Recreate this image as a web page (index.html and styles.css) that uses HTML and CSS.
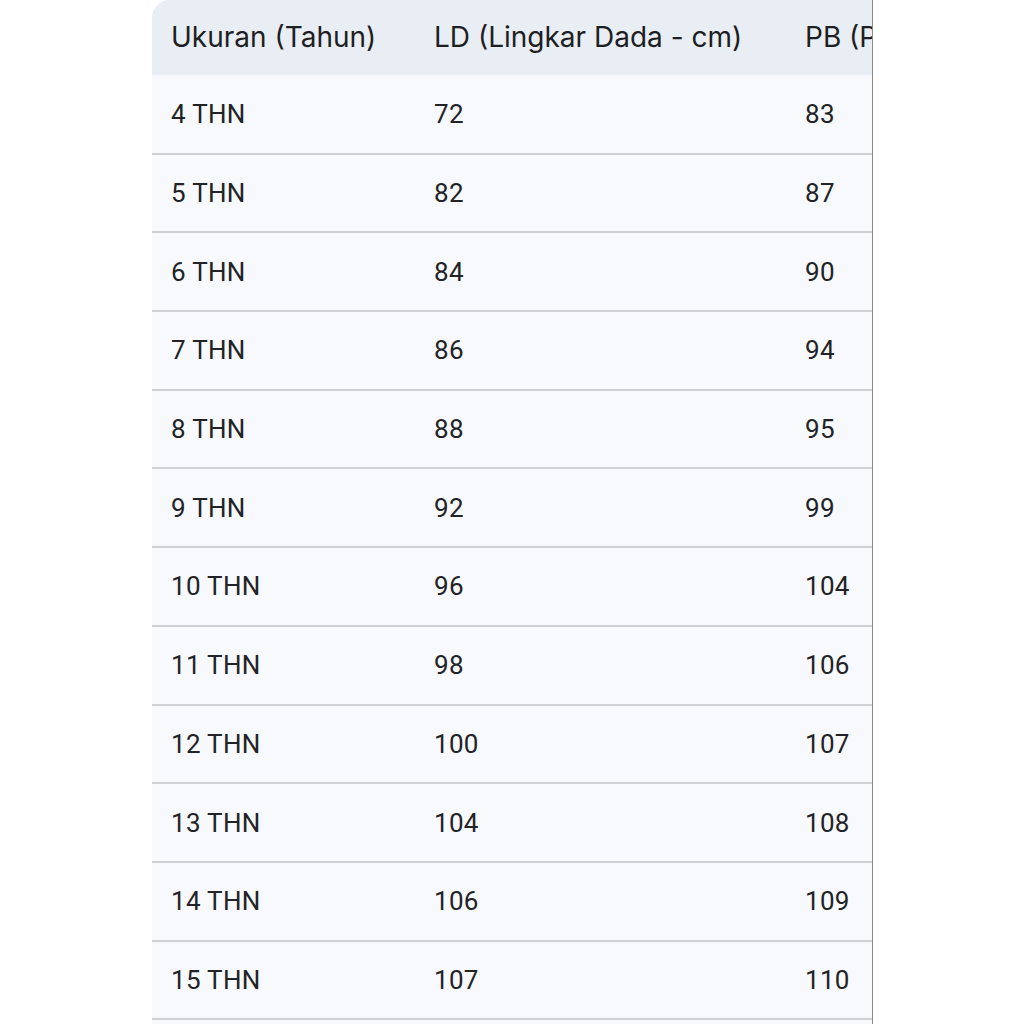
FILE: index.html
```html
<!DOCTYPE html>
<html>
<head>
<meta charset="utf-8">
<link rel="stylesheet" href="styles.css">
</head>
<body>
<div class="page">
  <div class="scroller">
    <table class="size-table">
      <colgroup>
        <col class="c1"><col class="c2"><col class="c3">
      </colgroup>
      <thead>
        <tr><th>Ukuran (Tahun)</th><th>LD (Lingkar Dada - cm)</th><th>PB (Panjang Badan - cm)</th></tr>
      </thead>
      <tbody>
        <tr><td>4 THN</td><td>72</td><td>83</td></tr>
        <tr><td>5 THN</td><td>82</td><td>87</td></tr>
        <tr><td>6 THN</td><td>84</td><td>90</td></tr>
        <tr><td>7 THN</td><td>86</td><td>94</td></tr>
        <tr><td>8 THN</td><td>88</td><td>95</td></tr>
        <tr><td>9 THN</td><td>92</td><td>99</td></tr>
        <tr><td>10 THN</td><td>96</td><td>104</td></tr>
        <tr><td>11 THN</td><td>98</td><td>106</td></tr>
        <tr><td>12 THN</td><td>100</td><td>107</td></tr>
        <tr><td>13 THN</td><td>104</td><td>108</td></tr>
        <tr><td>14 THN</td><td>106</td><td>109</td></tr>
        <tr><td>15 THN</td><td>107</td><td>110</td></tr>
        <tr><td>16 THN</td><td>108</td><td>111</td></tr>
      </tbody>
    </table>
  </div>
</div>
</body>
</html>
```
FILE: styles.css
```css
html, body {
  margin: 0;
  padding: 0;
  background: #ffffff;
}
.page {
  padding-left: 152px;
  height: 1024px;
  overflow: hidden;
}
.scroller {
  width: 720px;
  overflow: hidden;
  border-right: 1px solid #8a8a8a;
  border-top-left-radius: 18px;
  background: #f8f9fc;
}
.size-table {
  border-collapse: collapse;
  table-layout: fixed;
  width: 1000px;
  font-family: Roboto, "Noto Sans", sans-serif;
  font-size: 26px;
  color: #222326;
}
.c1 { width: 263px; }
.c2 { width: 371px; }
.c3 { width: 366px; }
.size-table th {
  background: #e9edf4;
  font-family: Inter, Roboto, sans-serif;
  font-weight: 400;
  font-size: 28px;
  text-align: left;
  height: 75px;
  padding: 0 19px 2px;
  color: #1e1f22;
  white-space: nowrap;
  box-sizing: border-box;
}
.size-table td {
  height: 78.7px;
  box-sizing: border-box;
  padding: 0 19px;
  border-bottom: 2px solid #cfd0d3;
  white-space: nowrap;
  background: #f8f9fc;
  letter-spacing: 0.3px;
}
```
